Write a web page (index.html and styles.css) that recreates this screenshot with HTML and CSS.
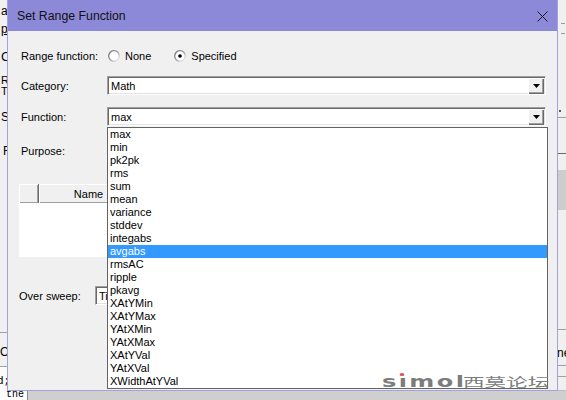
FILE: index.html
```html
<!DOCTYPE html>
<html>
<head>
<meta charset="utf-8">
<link rel="stylesheet" href="styles.css">
</head>
<body>
<div class="desk">
  <div class="desk-main">
    <div class="desk-left">
      <div class="dl dl-a">a</div>
      <div class="dl dl-p"><span class="ul">p</span></div>
      <div class="dl dl-c">C</div>
      <div class="dl dl-r">R</div>
      <div class="dl dl-t">T</div>
      <div class="dl dl-s">S</div>
      <div class="dl dl-f">F</div>
      <div class="dl-box"><span class="dl-o">O</span></div>
      <div class="dl-white"><div class="mono dl-d">d;</div></div>
    </div>
    <div class="desk-mid"></div>
    <div class="desk-right">
      <div class="dr-mark dr-m1"></div>
      <div class="dr-mark dr-m2"></div>
      <div class="dr-dot"></div>
      <div class="dr-line dr-l1"></div>
      <div class="dr-line dr-l2"></div>
      <div class="dr-block"></div>
      <div class="dr-line dr-l3"></div>
      <div class="dr-text">ne</div>
      <div class="dr-line dr-l4"></div>
      <div class="dr-line dr-l5"></div>
    </div>
  </div>
  <div class="desk-bottom">
    <div class="db-white"><span class="mono db-the">the</span></div>
    <div class="db-gray"></div>
  </div>
</div>

<div class="dialog">
  <div class="titlebar">
    <span class="title">Set Range Function</span>
    <svg class="close" width="11" height="11" viewBox="0 0 11 11"><path d="M0.5 0.5 L10.5 10.5 M10.5 0.5 L0.5 10.5" stroke="#1a1a1a" stroke-width="1" fill="none"/></svg>
  </div>
  <div class="body">
    <div class="row row-range">
      <span class="lbl">Range function:</span>
      <span class="radio">
        <svg width="12" height="12" viewBox="0 0 12 12"><defs><linearGradient id="rg" x1="0" y1="0" x2="1" y2="1"><stop offset="0" stop-color="#6a6a6a"/><stop offset="0.5" stop-color="#9a9a9a"/><stop offset="1" stop-color="#ffffff"/></linearGradient></defs><circle cx="6" cy="6" r="5.3" fill="#fff" stroke="url(#rg)" stroke-width="1.3"/></svg>
        <span class="rtext">None</span>
      </span>
      <span class="radio radio-2">
        <svg width="12" height="12" viewBox="0 0 12 12"><circle cx="6" cy="6" r="5.3" fill="#fff" stroke="url(#rg)" stroke-width="1.3"/><circle cx="6" cy="6" r="1.8" fill="#000"/></svg>
        <span class="rtext">Specified</span>
      </span>
    </div>
    <div class="row row-cat">
      <span class="lbl">Category:</span>
      <div class="combo"><span class="ctext">Math</span><span class="cbtn"><svg width="7" height="4" viewBox="0 0 7 4"><path d="M0 0 H7 L3.5 4 Z" fill="#000"/></svg></span></div>
    </div>
    <div class="row row-fn">
      <span class="lbl">Function:</span>
      <div class="combo"><span class="ctext">max</span><span class="cbtn"><svg width="7" height="4" viewBox="0 0 7 4"><path d="M0 0 H7 L3.5 4 Z" fill="#000"/></svg></span></div>
    </div>
    <div class="row row-purpose">
      <span class="lbl">Purpose:</span>
    </div>
    <div class="table">
      <div class="thead">
        <div class="th th-blank"></div>
        <div class="th th-name">Name</div>
        <div class="th th-rest"></div>
      </div>
      <div class="tbody"></div>
    </div>
    <div class="row row-sweep">
      <span class="lbl lbl-sweep">Over sweep:</span>
      <div class="combo combo-sweep"><span class="ctext">Ti</span></div>
    </div>
  </div>

  <ul class="dropdown">
    <li>max</li>
    <li>min</li>
    <li>pk2pk</li>
    <li>rms</li>
    <li>sum</li>
    <li>mean</li>
    <li>variance</li>
    <li>stddev</li>
    <li>integabs</li>
    <li class="sel">avgabs</li>
    <li>rmsAC</li>
    <li>ripple</li>
    <li>pkavg</li>
    <li>XAtYMin</li>
    <li>XAtYMax</li>
    <li>YAtXMin</li>
    <li>YAtXMax</li>
    <li>XAtYVal</li>
    <li>YAtXVal</li>
    <li>XWidthAtYVal</li>
  </ul>

  <div class="watermark"><span class="wm-en">s<span class="wm-i">ı</span>mol</span><span class="wm-cn">西莫论坛</span></div>
</div>
</body>
</html>
```

FILE: styles.css
```css
* { box-sizing: border-box; margin: 0; padding: 0; }
html, body { width: 566px; height: 400px; overflow: hidden; }
body {
  font-family: "Liberation Sans", Arial, sans-serif;
  font-size: 11px;
  color: #000;
  background: #f0f0f0;
  position: relative;
}
.mono { font-family: "Liberation Mono", "Courier New", monospace; }

/* background application */
.desk { display: flex; flex-direction: column; height: 400px; }
.desk-main { display: flex; height: 391px; }
.desk-left { width: 7px; display: flex; flex-direction: column; overflow: hidden; font-size: 12px; line-height: 12px; }
.dl { padding-left: 1px; height: 12px; white-space: nowrap; }
.dl-a { margin-top: 5px; }
.dl-p { margin-top: 6px; }
.ul { text-decoration: underline; }
.dl-c { margin-top: 16px; font-size: 13px; }
.dl-r { margin-top: 12px; height: 11px; line-height: 11px; font-size: 11px; }
.dl-t { margin-top: 0; height: 11px; line-height: 11px; font-size: 11px; }
.dl-s { margin-top: 14px; }
.dl-f { margin-top: 22px; padding-left: 3px; }
.dl-box { margin-top: 175px; height: 35px; border-top: 1px solid #a0a0a0; border-bottom: 1px solid #a0a0a0; display: flex; align-items: center; padding-top: 4px; }
.dl-o { padding-left: 0; font-size: 12px; }
.dl-white { flex: 1; background: #fbfbfb; padding-top: 9px; }
.dl-d { font-size: 11px; line-height: 11px; margin-left: -3px; }
.desk-mid { flex: 1; }
.desk-right { width: 8px; display: flex; flex-direction: column; overflow: hidden; }
.dr-mark { height: 1px; width: 4px; margin-left: 3px; background: #9a9a9a; }
.dr-m1 { margin-top: 23px; }
.dr-m2 { margin-top: 9px; }
.dr-dot { margin-top: 76px; width: 2px; height: 2px; background: #555; margin-left: 1px; }
.dr-line { height: 1px; background: #a0a0a0; }
.dr-l1 { margin-top: 5px; }
.dr-l2 { margin-top: 35px; background: #6a6a6a; }
.dr-block { margin-top: 16px; height: 40px; background: #cdcdcd; }
.dr-l3 { margin-top: 119px; }
.dr-text { margin-top: 17px; font-size: 12px; line-height: 12px; margin-left: -1px; white-space: nowrap; }
.dr-l4 { margin-top: 6px; }
.dr-l5 { margin-top: 10px; }
.desk-bottom { display: flex; flex: 1; }
.db-white { width: 28px; background: #fbfbfb; border-right: 1px solid #8a8a8a; padding-left: 6px; overflow: hidden; }
.db-the { font-size: 10px; line-height: 10px; display: block; margin-top: 0; }
.db-gray { flex: 1; background: #cfcfcf; border-top: 1px solid #bdbdbd; }

/* dialog window */
.dialog {
  position: absolute;
  left: 7px;
  top: 0;
  width: 551px;
  height: 391px;
  background: #f0f0f0;
  border: 1px solid #a4a2de;
  border-top: none;
  display: flex;
  flex-direction: column;
}
.titlebar {
  height: 31px;
  flex: none;
  background: #8c89d8;
  display: flex;
  align-items: center;
  justify-content: space-between;
  padding: 0 9px 0 9px;
}
.title { font-size: 12.3px; color: #111; }
.close { display: block; margin-top: 1px; }

.body { display: flex; flex-direction: column; padding-left: 13px; }
.row { display: flex; align-items: center; height: 19px; flex: none; }
.lbl { width: 86px; flex: none; white-space: nowrap; }
.row-range { margin-top: 15px; height: 20px; }
.radio { display: flex; align-items: center; }
.radio svg { display: block; margin-left: 1px; }
.rtext { margin-left: 5px; }
.radio-2 { margin-left: 22px; }
.row-cat { margin-top: 10px; }
.row-fn { margin-top: 12px; }
.row-purpose { margin-top: 15px; }

.combo {
  width: 439px;
  height: 19px;
  background: #fff;
  display: flex;
  align-items: center;
  justify-content: space-between;
  border-top: 1px solid #a0a0a0;
  border-left: 1px solid #a0a0a0;
  border-bottom: 1px solid #ffffff;
  border-right: 1px solid #ffffff;
  box-shadow: inset 1px 1px 0 #696969, inset -1px -1px 0 #e3e3e3;
  padding: 1px 1px 1px 2px;
}
.ctext { padding-left: 1px; white-space: nowrap; }
.cbtn {
  width: 16px;
  height: 16px;
  background: #f0f0f0;
  display: flex;
  align-items: center;
  justify-content: center;
  box-shadow: inset 1px 1px 0 #ffffff, inset -1px -1px 0 #696969, inset -2px -2px 0 #a0a0a0;
}
.cbtn svg { display: block; margin-top: 1px; }

.table { margin-left: -2px; margin-top: 24px; width: 521px; height: 73px; display: flex; flex-direction: column; flex: none; }
.thead { height: 19px; display: flex; background: #f0f0f0; }
.th { height: 19px; box-shadow: inset 1px 1px 0 #ffffff, inset -1px -1px 0 #a0a0a0; }
.th-blank { width: 20px; border-right: 1px solid #6a6a6a; }
.th-name { width: 100px; display: flex; align-items: center; justify-content: center; border-right: 1px solid #6a6a6a; }
.th-rest { flex: 1; }
.tbody { flex: 1; background: #fff; }

.row-sweep { margin-top: 29px; margin-left: -2px; }
.lbl-sweep { width: 76px; }
.combo-sweep { width: 200px; }

/* open drop-down list */
.dropdown {
  position: absolute;
  left: 99px;
  top: 127px;
  width: 441px;
  height: 262px;
  list-style: none;
  background: #fff;
  border: 1px solid #646464;
}
.dropdown li { height: 13px; line-height: 13px; padding-left: 2px; white-space: nowrap; }
.dropdown li.sel { background: #3399ff; color: #fff; }

/* forum watermark */
.watermark {
  position: absolute;
  left: 374px;
  top: 375px;
  height: 14px;
  display: flex;
  align-items: flex-end;
  color: #7c7c7c;
  white-space: nowrap;
}
.wm-en {
  display: inline-block;
  font-family: "DejaVu Sans", sans-serif;
  font-weight: bold;
  font-size: 15px;
  line-height: 14px;
  letter-spacing: 1.5px;
  width: 78px;
  transform: scaleX(1.6);
  transform-origin: left bottom;
}
.wm-i { position: relative; }
.wm-i::before { content: ""; position: absolute; left: 1px; top: 0; width: 3px; height: 3px; border-radius: 50%; background: #e0505a; }
.wm-cn {
  display: inline-block;
  font-family: "Noto Sans CJK SC", sans-serif;
  font-size: 12px;
  line-height: 14px;
  transform: scaleX(1.8);
  transform-origin: left bottom;
  margin-left: 3px;
}
```
